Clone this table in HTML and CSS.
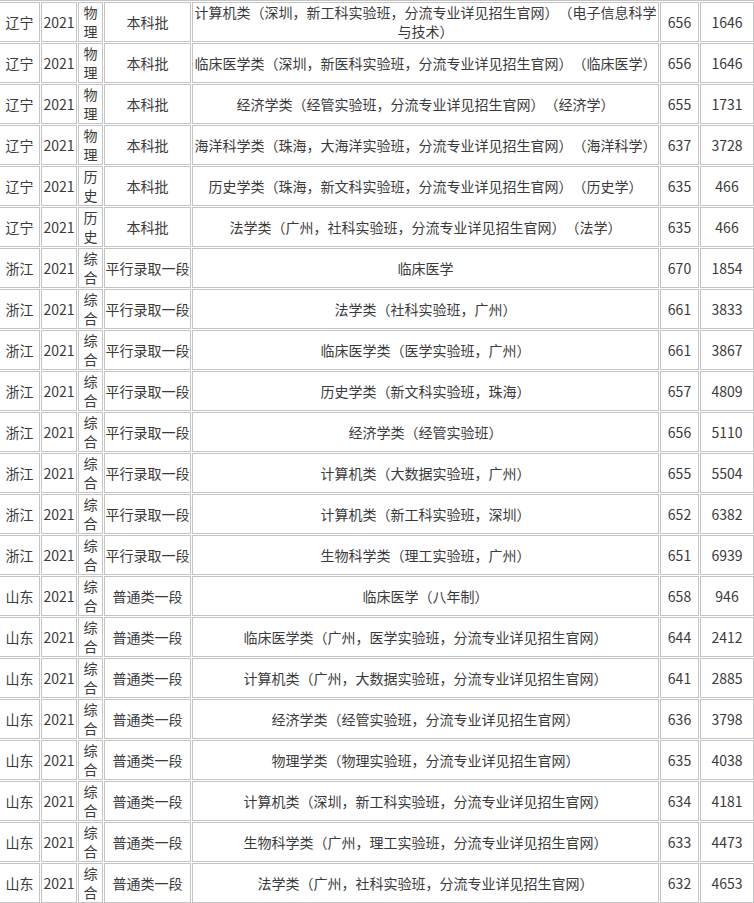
FILE: index.html
```html
<!DOCTYPE html>
<html lang="zh-CN">
<head>
<meta charset="utf-8">
<title>录取分数</title>
<link rel="stylesheet" href="styles.css">
</head>
<body>
<table class="score-table">
<colgroup>
<col class="c-prov"><col class="c-year"><col class="c-subj"><col class="c-batch"><col class="c-major"><col class="c-score"><col class="c-rank">
</colgroup>
<tbody>
<tr><td>辽宁</td><td>2021</td><td>物理</td><td>本科批</td><td>计算机类（深圳，新工科实验班，分流专业详见招生官网）（电子信息科学与技术）</td><td>656</td><td>1646</td></tr>
<tr><td>辽宁</td><td>2021</td><td>物理</td><td>本科批</td><td>临床医学类（深圳，新医科实验班，分流专业详见招生官网）（临床医学）</td><td>656</td><td>1646</td></tr>
<tr><td>辽宁</td><td>2021</td><td>物理</td><td>本科批</td><td>经济学类（经管实验班，分流专业详见招生官网）（经济学）</td><td>655</td><td>1731</td></tr>
<tr><td>辽宁</td><td>2021</td><td>物理</td><td>本科批</td><td>海洋科学类（珠海，大海洋实验班，分流专业详见招生官网）（海洋科学）</td><td>637</td><td>3728</td></tr>
<tr><td>辽宁</td><td>2021</td><td>历史</td><td>本科批</td><td>历史学类（珠海，新文科实验班，分流专业详见招生官网）（历史学）</td><td>635</td><td>466</td></tr>
<tr><td>辽宁</td><td>2021</td><td>历史</td><td>本科批</td><td>法学类（广州，社科实验班，分流专业详见招生官网）（法学）</td><td>635</td><td>466</td></tr>
<tr><td>浙江</td><td>2021</td><td>综合</td><td>平行录取一段</td><td>临床医学</td><td>670</td><td>1854</td></tr>
<tr><td>浙江</td><td>2021</td><td>综合</td><td>平行录取一段</td><td>法学类（社科实验班，广州）</td><td>661</td><td>3833</td></tr>
<tr><td>浙江</td><td>2021</td><td>综合</td><td>平行录取一段</td><td>临床医学类（医学实验班，广州）</td><td>661</td><td>3867</td></tr>
<tr><td>浙江</td><td>2021</td><td>综合</td><td>平行录取一段</td><td>历史学类（新文科实验班，珠海）</td><td>657</td><td>4809</td></tr>
<tr><td>浙江</td><td>2021</td><td>综合</td><td>平行录取一段</td><td>经济学类（经管实验班）</td><td>656</td><td>5110</td></tr>
<tr><td>浙江</td><td>2021</td><td>综合</td><td>平行录取一段</td><td>计算机类（大数据实验班，广州）</td><td>655</td><td>5504</td></tr>
<tr><td>浙江</td><td>2021</td><td>综合</td><td>平行录取一段</td><td>计算机类（新工科实验班，深圳）</td><td>652</td><td>6382</td></tr>
<tr><td>浙江</td><td>2021</td><td>综合</td><td>平行录取一段</td><td>生物科学类（理工实验班，广州）</td><td>651</td><td>6939</td></tr>
<tr><td>山东</td><td>2021</td><td>综合</td><td>普通类一段</td><td>临床医学（八年制）</td><td>658</td><td>946</td></tr>
<tr><td>山东</td><td>2021</td><td>综合</td><td>普通类一段</td><td>临床医学类（广州，医学实验班，分流专业详见招生官网）</td><td>644</td><td>2412</td></tr>
<tr><td>山东</td><td>2021</td><td>综合</td><td>普通类一段</td><td>计算机类（广州，大数据实验班，分流专业详见招生官网）</td><td>641</td><td>2885</td></tr>
<tr><td>山东</td><td>2021</td><td>综合</td><td>普通类一段</td><td>经济学类（经管实验班，分流专业详见招生官网）</td><td>636</td><td>3798</td></tr>
<tr><td>山东</td><td>2021</td><td>综合</td><td>普通类一段</td><td>物理学类（物理实验班，分流专业详见招生官网）</td><td>635</td><td>4038</td></tr>
<tr><td>山东</td><td>2021</td><td>综合</td><td>普通类一段</td><td>计算机类（深圳，新工科实验班，分流专业详见招生官网）</td><td>634</td><td>4181</td></tr>
<tr><td>山东</td><td>2021</td><td>综合</td><td>普通类一段</td><td>生物科学类（广州，理工实验班，分流专业详见招生官网）</td><td>633</td><td>4473</td></tr>
<tr><td>山东</td><td>2021</td><td>综合</td><td>普通类一段</td><td>法学类（广州，社科实验班，分流专业详见招生官网）</td><td>632</td><td>4653</td></tr>
</tbody>
</table>
</body>
</html>
```
FILE: styles.css
```css
html, body {
  margin: 0;
  padding: 0;
  background: #fff;
}
body {
  overflow: hidden;
  font-family: "Noto Sans CJK SC", "Noto Sans", sans-serif;
  font-size: 14px;
  color: #3a3a3a;
}
.score-table {
  table-layout: fixed;
  border-collapse: separate;
  border-spacing: 1px;
  border-top: 1px solid #c4c4c4;
  width: 757px;
  margin-left: -2px;
}
.score-table td {
  box-sizing: border-box;
  height: 40px;
  padding: 0;
  border: 1px solid #c4c4c4;
  text-align: center;
  vertical-align: middle;
  line-height: 19px;
  word-break: break-all;
  text-spacing-trim: space-all;
}
.c-prov { width: 41px; }
.c-year { width: 36px; }
.c-subj { width: 25px; }
.c-batch { width: 87px; }
.c-major { width: 467px; }
.c-score { width: 39px; }
.c-rank { width: 54px; }
```
